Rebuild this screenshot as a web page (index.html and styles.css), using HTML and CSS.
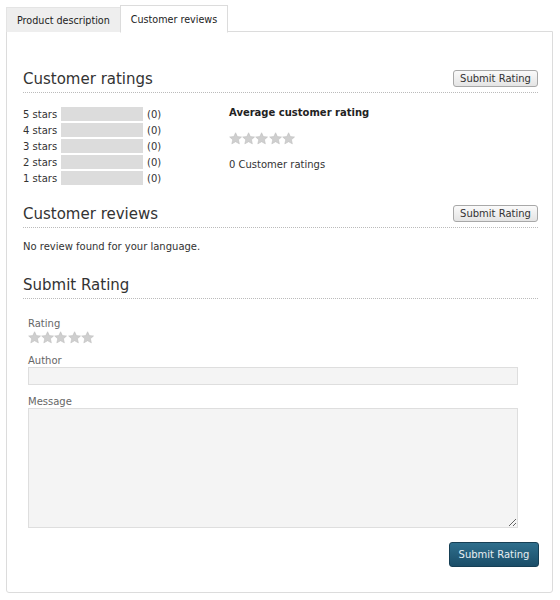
FILE: index.html
```html
<!DOCTYPE html>
<html>
<head>
<meta charset="utf-8">
<link rel="stylesheet" href="styles.css">
</head>
<body>
<div class="wrap">
  <div class="tabs">
    <div class="tab">Product description</div>
    <div class="tab active">Customer reviews</div>
  </div>
  <div class="panel">
    <div class="section-head">
      <h2>Customer ratings</h2>
      <button class="btn">Submit Rating</button>
    </div>
    <div class="ratings">
      <div class="dist">
        <div class="row"><span class="lbl">5 stars</span><span class="bar"></span><span class="cnt">(0)</span></div>
        <div class="row"><span class="lbl">4 stars</span><span class="bar"></span><span class="cnt">(0)</span></div>
        <div class="row"><span class="lbl">3 stars</span><span class="bar"></span><span class="cnt">(0)</span></div>
        <div class="row"><span class="lbl">2 stars</span><span class="bar"></span><span class="cnt">(0)</span></div>
        <div class="row"><span class="lbl">1 stars</span><span class="bar"></span><span class="cnt">(0)</span></div>
      </div>
      <div class="avg">
        <div class="avg-title">Average customer rating</div>
        <div class="stars avg-stars">
          <svg viewBox="0 0 14 14"><path d="M7 0.8 L8.9 4.9 L13.3 5.3 L10 8.2 L11 12.6 L7 10.3 L3 12.6 L4 8.2 L0.7 5.3 L5.1 4.9 Z"/></svg>
          <svg viewBox="0 0 14 14"><path d="M7 0.8 L8.9 4.9 L13.3 5.3 L10 8.2 L11 12.6 L7 10.3 L3 12.6 L4 8.2 L0.7 5.3 L5.1 4.9 Z"/></svg>
          <svg viewBox="0 0 14 14"><path d="M7 0.8 L8.9 4.9 L13.3 5.3 L10 8.2 L11 12.6 L7 10.3 L3 12.6 L4 8.2 L0.7 5.3 L5.1 4.9 Z"/></svg>
          <svg viewBox="0 0 14 14"><path d="M7 0.8 L8.9 4.9 L13.3 5.3 L10 8.2 L11 12.6 L7 10.3 L3 12.6 L4 8.2 L0.7 5.3 L5.1 4.9 Z"/></svg>
          <svg viewBox="0 0 14 14"><path d="M7 0.8 L8.9 4.9 L13.3 5.3 L10 8.2 L11 12.6 L7 10.3 L3 12.6 L4 8.2 L0.7 5.3 L5.1 4.9 Z"/></svg>
        </div>
        <div class="avg-count">0 Customer ratings</div>
      </div>
    </div>

    <div class="section-head second">
      <h2>Customer reviews</h2>
      <button class="btn">Submit Rating</button>
    </div>
    <p class="none">No review found for your language.</p>

    <div class="section-head third">
      <h2>Submit Rating</h2>
    </div>
    <form class="form">
      <label class="flabel">Rating</label>
      <div class="stars form-stars">
        <svg viewBox="0 0 14 14"><path d="M7 0.8 L8.9 4.9 L13.3 5.3 L10 8.2 L11 12.6 L7 10.3 L3 12.6 L4 8.2 L0.7 5.3 L5.1 4.9 Z"/></svg>
        <svg viewBox="0 0 14 14"><path d="M7 0.8 L8.9 4.9 L13.3 5.3 L10 8.2 L11 12.6 L7 10.3 L3 12.6 L4 8.2 L0.7 5.3 L5.1 4.9 Z"/></svg>
        <svg viewBox="0 0 14 14"><path d="M7 0.8 L8.9 4.9 L13.3 5.3 L10 8.2 L11 12.6 L7 10.3 L3 12.6 L4 8.2 L0.7 5.3 L5.1 4.9 Z"/></svg>
        <svg viewBox="0 0 14 14"><path d="M7 0.8 L8.9 4.9 L13.3 5.3 L10 8.2 L11 12.6 L7 10.3 L3 12.6 L4 8.2 L0.7 5.3 L5.1 4.9 Z"/></svg>
        <svg viewBox="0 0 14 14"><path d="M7 0.8 L8.9 4.9 L13.3 5.3 L10 8.2 L11 12.6 L7 10.3 L3 12.6 L4 8.2 L0.7 5.3 L5.1 4.9 Z"/></svg>
      </div>
      <label class="flabel">Author</label>
      <input class="input" type="text">
      <label class="flabel">Message</label>
      <textarea class="textarea"></textarea>
      <div class="actions"><button type="button" class="btn-primary">Submit Rating</button></div>
    </form>
  </div>
</div>
</body>
</html>
```
FILE: styles.css
```css
* { box-sizing: border-box; }
html, body { margin: 0; padding: 0; background: #fff; }
body {
  font-family: "DejaVu Sans", Verdana, sans-serif;
  font-size: 10px;
  color: #333;
}
.wrap { padding: 5px 7px 0 6px; width: 560px; }
.tabs { display: flex; height: 27px; position: relative; z-index: 1; align-items: flex-end; }
.tab {
  padding: 0 10px;
  height: 25px;
  line-height: 25px;
  font-size: 9.6px;
  background: #eeeeee;
  color: #222;
  border-top: 1px solid #e4e4e4;
  border-left: 1px solid #e4e4e4;
}
.tab.active {
  padding: 0 10px;
  background: #fff;
  border: 1px solid #dcdcdc;
  border-bottom: 1px solid #fff;
  height: 28px;
  line-height: 27px;
  margin-bottom: -1px;
}
.panel {
  border: 1px solid #dcdcdc;
  margin-top: -1px;
  height: 562px;
  padding: 37px 14px 0 16px;
  border-radius: 0 0 3px 3px;
}
.section-head {
  display: flex;
  justify-content: space-between;
  align-items: flex-end;
  border-bottom: 1px dotted #bbb;
  padding-bottom: 3px;
  height: 24px;
}
.section-head h2 {
  margin: 0;
  font-weight: normal;
  font-size: 15px;
  color: #333;
  line-height: 20px;
}
.section-head.second { margin-top: 18px; }
.section-head.third { margin-top: 21px; }
.btn {
  font-family: "DejaVu Sans", Verdana, sans-serif;
  font-size: 10px;
  color: #333;
  background: linear-gradient(#fafafa, #e4e4e4);
  border: 1px solid #a8a8a8;
  border-radius: 3px;
  height: 17px;
  width: 85px;
  padding: 0;
  margin-bottom: 2px;
}
.ratings { display: flex; margin-top: 13px; }
.dist { width: 206px; flex: none; }
.row { display: flex; align-items: center; height: 16px; white-space: nowrap; }
.lbl { width: 38px; flex: none; }
.bar { width: 82px; height: 14px; background: #dcdcdc; margin-right: 4px; flex: none; }
.avg { padding-top: 0; }
.avg-title { font-weight: bold; color: #222; line-height: 14px; }
.stars { display: flex; }
.stars svg { width: 13.2px; height: 13.2px; fill: #cfcfcf; stroke: #bdbdbd; stroke-width: 0.6; }
.avg-stars { margin-top: 12px; }
.avg-count { margin-top: 13px; line-height: 14px; }
.none { margin: 12px 0 0; line-height: 14px; }
.form { padding: 18px 20px 0 5px; display: flex; flex-direction: column; }
.flabel { color: #666; line-height: 13px; }
.form-stars { margin-top: 1px; }
.form-stars + .flabel { margin-top: 10px; }
.input {
  margin-top: 0;
  height: 18px;
  background: #f4f4f4;
  border: 1px solid #dedede;
  width: 490px;
}
.input + .flabel { margin-top: 10px; }
.textarea {
  margin-top: 0;
  height: 120px;
  width: 490px;
  background: #f4f4f4;
  border: 1px solid #dedede;
  resize: both;
}
.actions { display: flex; justify-content: flex-end; margin-top: 14px; }
.btn-primary {
  font-family: "DejaVu Sans", Verdana, sans-serif;
  font-size: 10px;
  color: #e8eef2;
  background: linear-gradient(#2f6f8d, #1a4d68);
  border: 1px solid #163f55;
  border-radius: 3px;
  height: 25px;
  width: 90px;
  padding: 0;
  margin-right: -21px;
}
```
